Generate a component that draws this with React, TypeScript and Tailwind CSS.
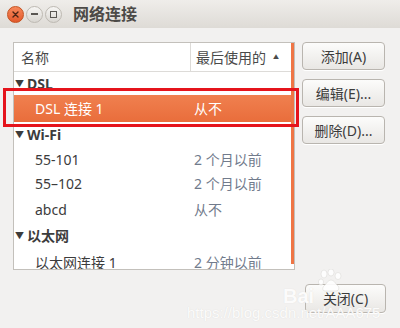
import React from "react";

type Row =
  | { kind: "group"; label: string; h: string }
  | { kind: "item"; name: string; last: string; h: string; selected?: boolean };

const rows: Row[] = [
  { kind: "group", label: "DSL", h: "h-[23px]" },
  { kind: "item", name: "DSL 连接 1", last: "从不", h: "h-[27px]", selected: true },
  { kind: "group", label: "Wi-Fi", h: "h-[25px]" },
  { kind: "item", name: "55-101", last: "2 个月以前", h: "h-[24px]" },
  { kind: "item", name: "55–102", last: "2 个月以前", h: "h-[25px]" },
  { kind: "item", name: "abcd", last: "从不", h: "h-[26px]" },
  { kind: "group", label: "以太网", h: "h-[27px]" },
  { kind: "item", name: "以太网连接 1", last: "2 分钟以前", h: "h-[26px]" },
];

const font = "font-['Noto_Sans','Noto_Sans_CJK_SC',sans-serif]";

const Button = ({ label, className = "" }: { label: string; className?: string }) => (
  <div
    className={`flex items-center justify-center rounded-[4px] border border-[#b9b5af] bg-gradient-to-b from-[#fcfcfb] to-[#e9e7e4] text-[14px] text-[#3c3c3c] shadow-[0_1px_0_#fff] ${className}`}
  >
    {label}
  </div>
);

const TitleButton = ({ glyph }: { glyph: React.ReactNode }) => (
  <div className="flex h-[17px] w-[17px] items-center justify-center rounded-full border border-[#bdb9b2] bg-gradient-to-b from-[#f7f6f4] to-[#d9d6d1]">
    {glyph}
  </div>
);

export default function App() {
  return (
    <div className={`relative flex h-[328px] w-[400px] flex-col overflow-hidden bg-[#f2f1f0] ${font}`}>
      {/* title bar */}
      <div className="flex h-[28px] items-center bg-gradient-to-b from-[#efedea] to-[#dedbd6] pl-[7px]">
        <div className="flex items-center gap-[2px]">
          <div className="flex h-[17px] w-[17px] items-center justify-center rounded-full border border-[#c4511f] bg-gradient-to-b from-[#f7885a] to-[#e2582a]">
            <svg width="7" height="7" viewBox="0 0 7 7">
              <path d="M1 1L6 6M6 1L1 6" stroke="#4a2414" strokeWidth="1.4" strokeLinecap="round" />
            </svg>
          </div>
          <TitleButton glyph={<div className="h-[1.5px] w-[7px] bg-[#5a5753]" />} />
          <TitleButton glyph={<div className="h-[7px] w-[7px] border-[1.5px] border-[#5a5753]" />} />
        </div>
        <div className="ml-[11px] text-[16px] font-bold text-[#4c4a47]">网络连接</div>
      </div>

      {/* body */}
      <div className="flex pl-[13px] pt-[14px]">
        <div className="relative h-[228px] w-[282px] overflow-hidden border border-[#c3c0bb] bg-white">
          <div className="flex h-[29px] border-b border-[#dddbd8] text-[14px] text-[#4a4a4a]">
            <div className="flex w-[177px] items-center border-r border-[#dddbd8] pl-[7px]">名称</div>
            <div className="flex flex-1 items-center pl-[5px]">
              最后使用的
              <span className="ml-[7px] text-[6px] text-[#4a4a4a]">▲</span>
            </div>
          </div>
          {rows.map((r, i) =>
            r.kind === "group" ? (
              <div key={i} className={`flex items-center ${r.h} pl-[1px] text-[14px] font-bold text-[#3c3c3c]`}>
                <span className="mr-[3px] text-[9px] text-[#3c3c3c]">▼</span>
                {r.label}
              </div>
            ) : (
              <div
                key={i}
                className={`flex items-center ${r.h} text-[14px] ${
                  r.selected ? "bg-gradient-to-b from-[#f0804f] to-[#e96d3b] text-white" : "text-[#3c3c3c]"
                }`}
              >
                <div className="w-[180px] pl-[21px]">{r.name}</div>
                <div className={r.selected ? "text-white" : "text-[#717b8c]"}>{r.last}</div>
              </div>
            )
          )}
          {/* overlay scrollbar indicator */}
          <div className="absolute right-0 top-0 h-[221px] w-[3px] bg-[#ef7545]" />
        </div>

        <div className="ml-[7px] flex flex-col gap-[9px]">
          <Button label="添加(A)" className="h-[28px] w-[83px]" />
          <Button label="编辑(E)..." className="h-[28px] w-[83px]" />
          <Button label="删除(D)..." className="h-[28px] w-[83px]" />
        </div>
      </div>

      <div className="flex justify-end pr-[14px] pt-[14px]">
        <Button label="关闭(C)" className="h-[29px] w-[81px]" />
      </div>

      {/* red highlight annotation */}
      <div className="pointer-events-none absolute left-[3px] top-[88px] h-[39px] w-[296px] border-[3px] border-[#e5141c]" />

      {/* watermark */}
      <div className="pointer-events-none absolute left-[283px] top-[281px] font-['Liberation_Sans',sans-serif] text-[20px] font-bold text-white/90 [text-shadow:0_0_1px_#dad8d5]">
        Bai
      </div>
      <svg className="pointer-events-none absolute left-[317px] top-[269px] opacity-90" width="26" height="24" viewBox="0 0 26 24">
        <g fill="#fff" stroke="#dcdad7" strokeWidth="0.6">
          <ellipse cx="7" cy="5" rx="3" ry="4" />
          <ellipse cx="14" cy="3.5" rx="3" ry="3.5" />
          <ellipse cx="21" cy="7" rx="3" ry="3.5" />
          <ellipse cx="4" cy="13" rx="2.6" ry="3" />
          <path d="M8 22c-3 0-3-4 0-6 2-2 3-5 6-5s4 3 6 5c3 2 2 6-1 6z" />
        </g>
      </svg>
      <div className="pointer-events-none absolute left-[187px] top-[302px] font-['Liberation_Sans',sans-serif] text-[15px] text-white/90 [text-shadow:0_0_1px_#d6d4d1]">
        https://blog.csdn.net/AAA675
      </div>
    </div>
  );
}
